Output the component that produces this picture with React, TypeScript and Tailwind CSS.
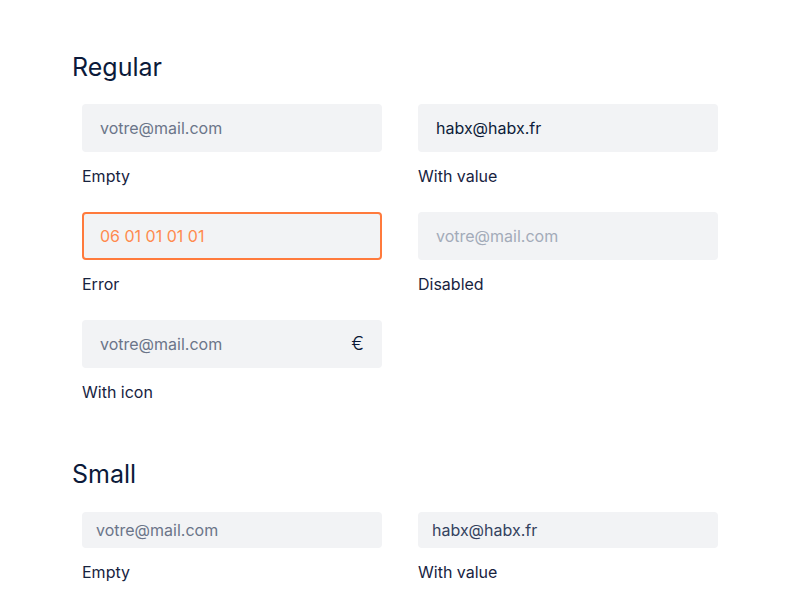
import React from "react";

const font = { fontFamily: "Inter, 'Open Sans', sans-serif" };

function Field({
  label,
  value,
  placeholder,
  variant = "regular",
  error = false,
  disabled = false,
  icon = false,
}: {
  label: string;
  value?: string;
  placeholder?: string;
  variant?: "regular" | "small";
  error?: boolean;
  disabled?: boolean;
  icon?: boolean;
}) {
  const small = variant === "small";
  let textCls = "text-[#6b7589]";
  if (value) textCls = small ? "text-[#34425e]" : "text-[#0e1c3a]";
  if (disabled) textCls = "text-[#a3abb9]";
  if (error) textCls = "text-[#ff8a4e]";
  return (
    <div className="flex flex-col">
      <div
        className={
          "flex items-center justify-between rounded-[4px] bg-[#f2f3f5] " +
          (small ? "h-9 px-[14px] " : "h-12 px-[18px] ") +
          (error ? "border-2 border-[#ff7a3c] pl-[16px]" : "")
        }
      >
        <span className={"text-[16px] leading-6 " + textCls}>{value ?? placeholder}</span>
        {icon && <span className="text-[19px] font-light leading-6 text-[#0b1836]">€</span>}
      </div>
      <div className="mt-3 text-[16px] leading-6 text-[#17233f]">{label}</div>
    </div>
  );
}

export default function App() {
  return (
    <div className="min-h-[600px] bg-white pl-[72px] pt-[51px]" style={font}>
      <h2 className="text-[25px] leading-8 text-[#0b1a3a]">Regular</h2>
      <div className="mt-[21px] ml-[10px] grid w-[636px] grid-cols-2 gap-x-9 gap-y-6">
        <Field label="Empty" placeholder="votre@mail.com" />
        <Field label="With value" value="habx@habx.fr" />
        <Field label="Error" value="06 01 01 01 01" error />
        <Field label="Disabled" placeholder="votre@mail.com" disabled />
        <Field label="With icon" placeholder="votre@mail.com" icon />
      </div>
      <h2 className="mt-[54px] text-[25px] leading-8 text-[#0b1a3a]">Small</h2>
      <div className="mt-[22px] ml-[10px] grid w-[636px] grid-cols-2 gap-x-9 gap-y-6">
        <Field label="Empty" placeholder="votre@mail.com" variant="small" />
        <Field label="With value" value="habx@habx.fr" variant="small" />
      </div>
    </div>
  );
}
